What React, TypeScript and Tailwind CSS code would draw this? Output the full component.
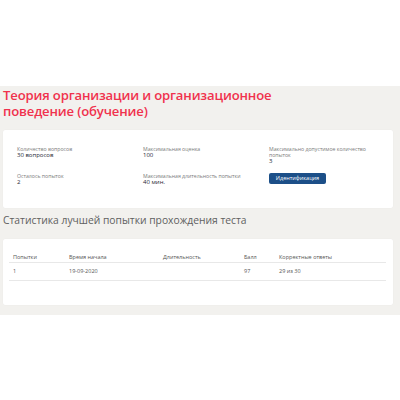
import React from "react";

const font = { fontFamily: '"Open Sans", "Liberation Sans", sans-serif' };

function Field({ label, value }: { label: React.ReactNode; value: string }) {
  return (
    <div className="flex flex-col">
      <div className="text-[5.2px] leading-[6px] text-[#7a7a7a]">{label}</div>
      <div className="text-[6px] leading-[6px] text-[#262633]">{value}</div>
    </div>
  );
}

const th = "h-[12px] pl-[4px] pt-[3px] leading-[6px] border-b-[1.5px] border-[#e8e8e8]";
const td = "h-[18px] pl-[4px] pt-[5px] leading-[6px] border-b-[1.5px] border-[#e8e8e8]";

export default function App() {
  return (
    <div className="w-[400px] h-[400px] bg-white" style={font}>
      <div className="h-[86px]" />
      <div className="bg-[#f2f1ee] pt-[1px] pb-[10px] pl-[3px] pr-[7px]">
        <h1 className="text-[13.1px] leading-[16px] text-[#f0324d] font-semibold tracking-[-0.15px]">
          Теория организации и организационное
          <br />
          поведение (обучение)
        </h1>
        <div className="mt-[11px] bg-white rounded-[2px] shadow-[0_0_1px_rgba(0,0,0,0.08)] pt-[16px] pb-[23px] pl-[14px] leading-[6px]">
          <div className="grid grid-cols-[126px_126px_1fr] gap-y-[9px]">
            <Field label="Количество вопросов" value="30 вопросов" />
            <Field label="Максимальная оценка" value="100" />
            <Field
              label={
                <>
                  Максимально допустимое количество
                  <br />
                  попыток
                </>
              }
              value="3"
            />
            <Field label="Осталось попыток" value="2" />
            <Field label="Максимальная длительность попытки" value="40 мин." />
            <div className="flex">
              <button className="block w-[57px] h-[11px] bg-[#1c4f88] rounded-[2px] text-white text-[5.5px] leading-[11px] text-center">
                Идентификация
              </button>
            </div>
          </div>
        </div>
        <h2 className="mt-[5px] text-[10.3px] leading-[14px] text-[#606060] font-normal">
          Статистика лучшей попытки прохождения теста
        </h2>
        <div className="mt-[12px] bg-white rounded-[2px] shadow-[0_0_1px_rgba(0,0,0,0.08)] pt-[12px] pb-[24px] pl-[6px] pr-[7px]">
          <div className="grid grid-cols-[56px_94px_81px_35px_1fr] text-[5.5px] text-[#555]">
            <div className={th}>Попытки</div>
            <div className={th}>Время начала</div>
            <div className={th}>Длительность</div>
            <div className={th}>Балл</div>
            <div className={th}>Корректные ответы</div>
            <div className={td}>1</div>
            <div className={td}>19-09-2020</div>
            <div className={td}></div>
            <div className={td}>97</div>
            <div className={td}>29 из 30</div>
          </div>
        </div>
      </div>
    </div>
  );
}
